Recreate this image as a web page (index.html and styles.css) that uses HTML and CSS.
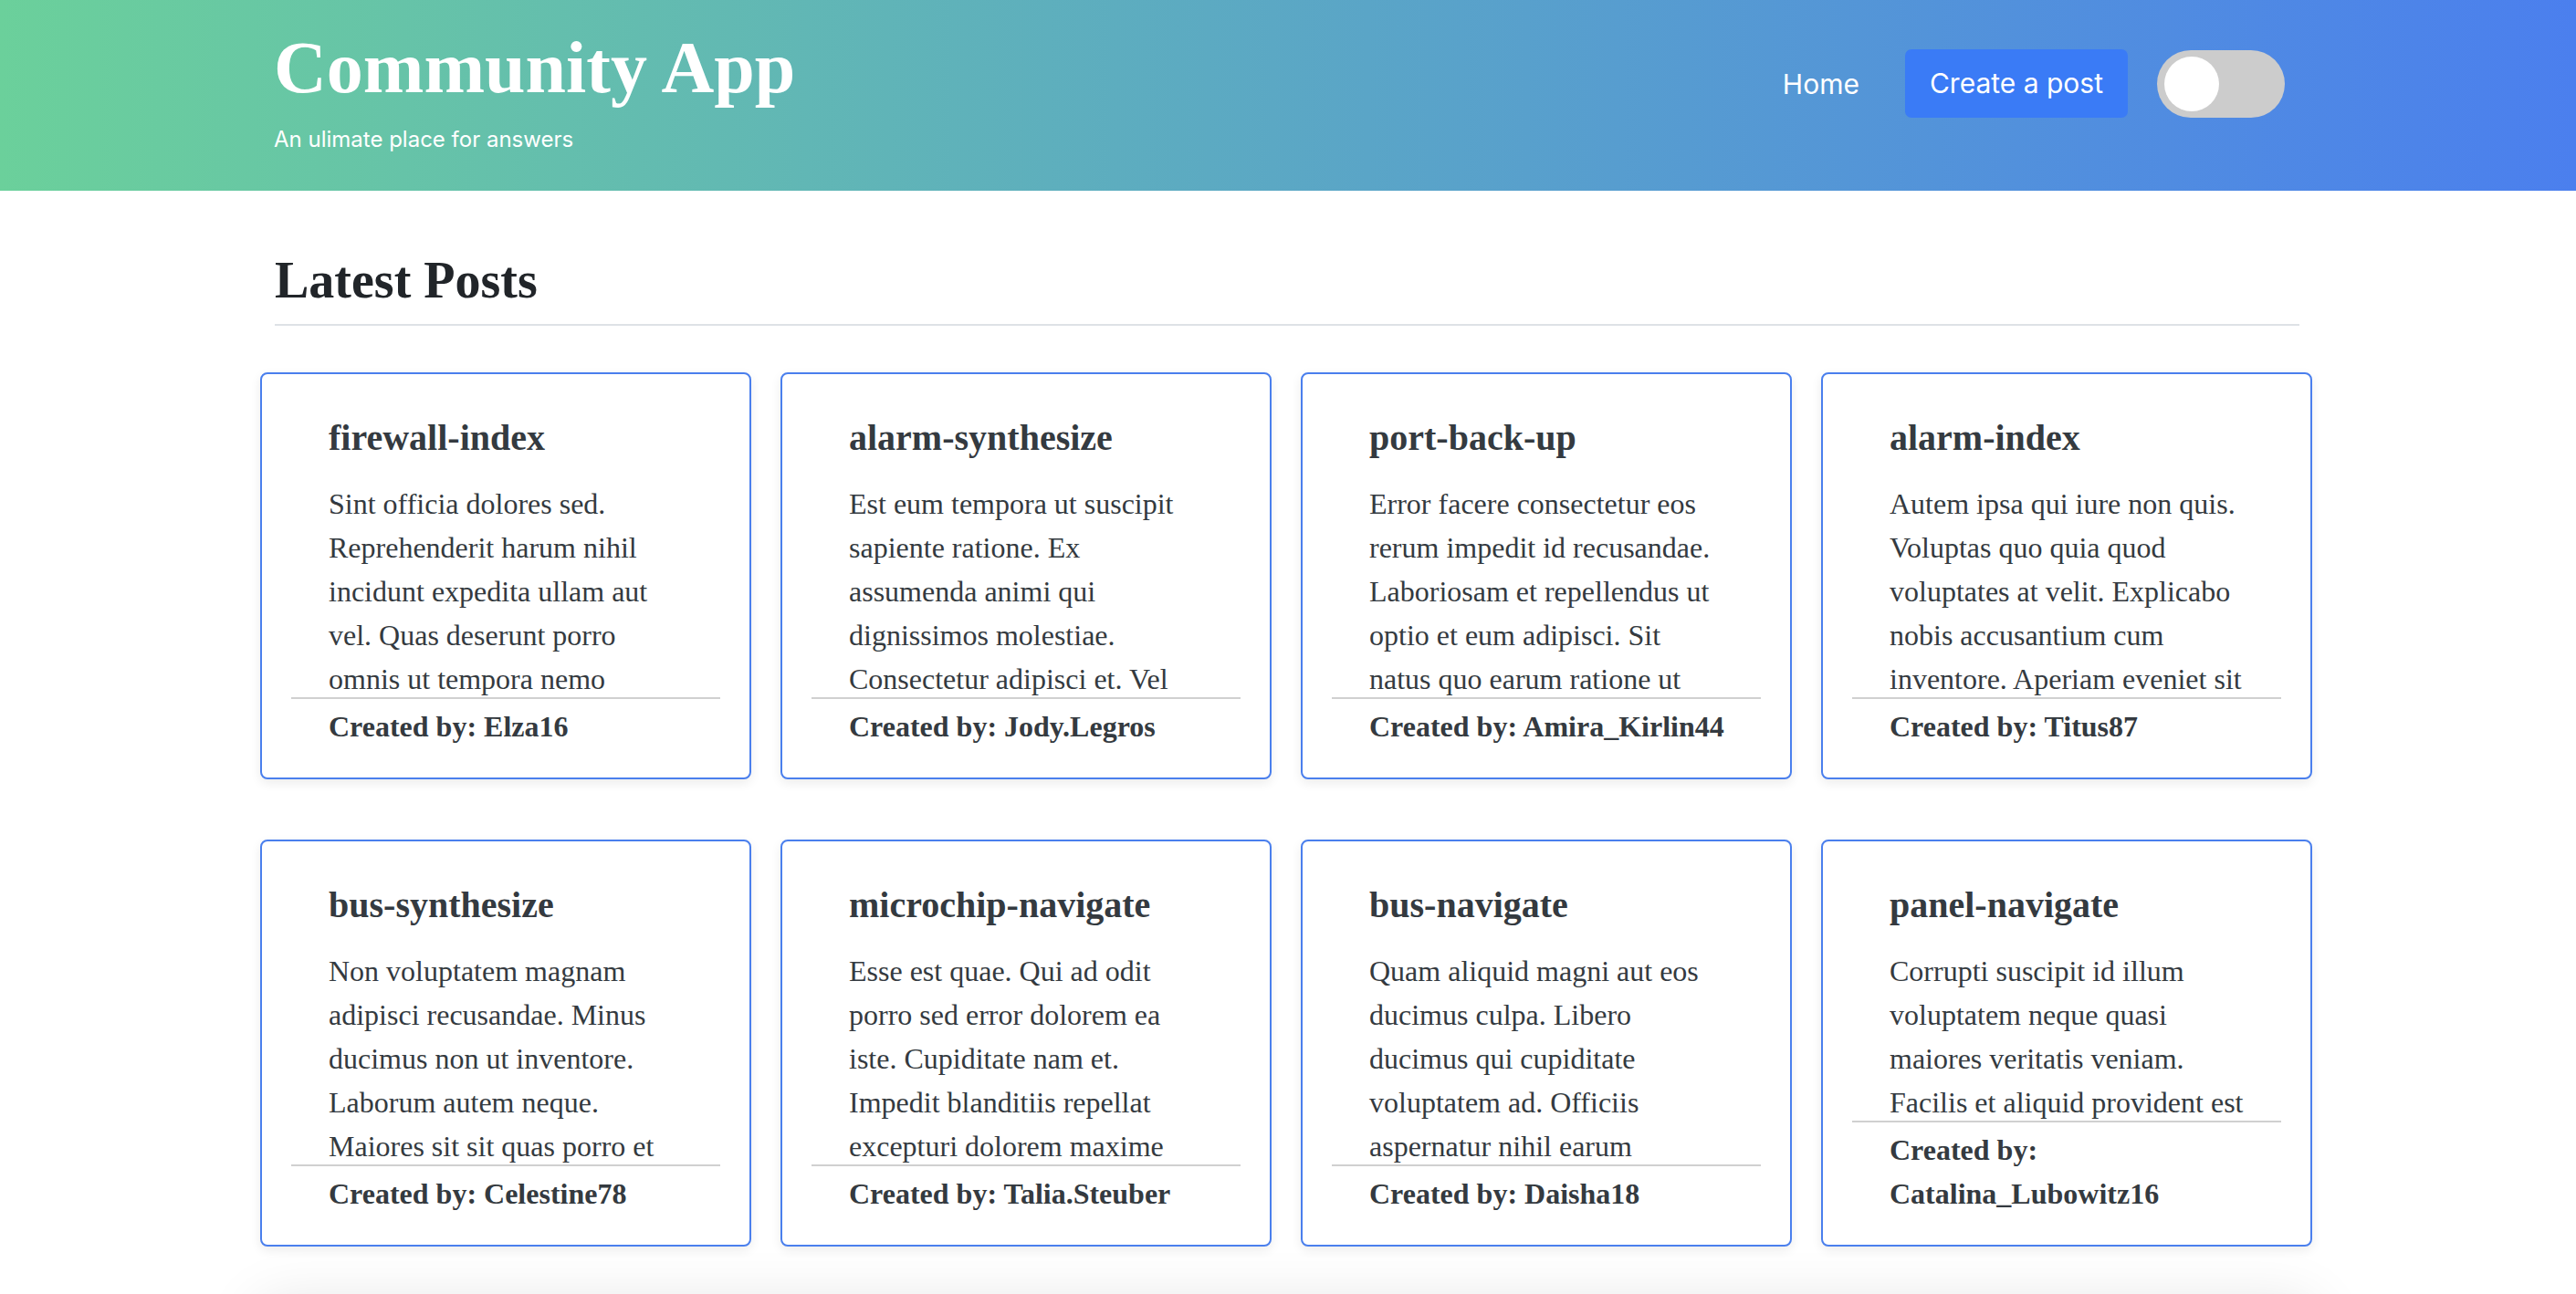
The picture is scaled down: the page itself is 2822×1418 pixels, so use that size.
FILE: index.html
```html
<!DOCTYPE html>
<html lang="en">
<head>
<meta charset="utf-8">
<title>Community App</title>
<link rel="stylesheet" href="styles.css">
</head>
<body>
<header class="site-header">
  <div class="header-inner">
    <div class="brand">
      <h1 class="brand-title">Community App</h1>
      <p class="brand-tagline">An ulimate place for answers</p>
    </div>
    <nav class="nav">
      <a class="nav-link" href="#">Home</a>
      <a class="nav-button" href="#">Create a post</a>
      <label class="switch"><span class="switch-knob"></span></label>
    </nav>
  </div>
</header>
<main class="main">
  <section class="posts-head">
    <h2 class="posts-title">Latest Posts</h2>
  </section>
  <div class="post-grid">
    <article class="post-card">
      <h3 class="post-title">firewall-index</h3>
      <p class="post-body">Sint officia dolores sed. Reprehenderit harum nihil incidunt expedita ullam aut vel. Quas deserunt porro omnis ut tempora nemo exercitationem sit. Ut rerum quis voluptas et.</p>
      <div class="post-footer">Created by: Elza16</div>
    </article>
    <article class="post-card">
      <h3 class="post-title">alarm-synthesize</h3>
      <p class="post-body">Est eum tempora ut suscipit sapiente ratione. Ex assumenda animi qui dignissimos molestiae. Consectetur adipisci et. Vel voluptatibus rerum in.</p>
      <div class="post-footer">Created by: Jody.Legros</div>
    </article>
    <article class="post-card">
      <h3 class="post-title">port-back-up</h3>
      <p class="post-body">Error facere consectetur eos rerum impedit id recusandae. Laboriosam et repellendus ut optio et eum adipisci. Sit natus quo earum ratione ut reprehenderit dolor.</p>
      <div class="post-footer">Created by: Amira_Kirlin44</div>
    </article>
    <article class="post-card">
      <h3 class="post-title">alarm-index</h3>
      <p class="post-body">Autem ipsa qui iure non quis. Voluptas quo quia quod voluptates at velit. Explicabo nobis accusantium cum inventore. Aperiam eveniet sit necessitatibus rem.</p>
      <div class="post-footer">Created by: Titus87</div>
    </article>
    <article class="post-card">
      <h3 class="post-title">bus-synthesize</h3>
      <p class="post-body">Non voluptatem magnam adipisci recusandae. Minus ducimus non ut inventore. Laborum autem neque. Maiores sit sit quas porro et consequuntur dolorum.</p>
      <div class="post-footer">Created by: Celestine78</div>
    </article>
    <article class="post-card">
      <h3 class="post-title">microchip-navigate</h3>
      <p class="post-body">Esse est quae. Qui ad odit porro sed error dolorem ea iste. Cupiditate nam et. Impedit blanditiis repellat excepturi dolorem maxime exercitationem sed.</p>
      <div class="post-footer">Created by: Talia.Steuber</div>
    </article>
    <article class="post-card">
      <h3 class="post-title">bus-navigate</h3>
      <p class="post-body">Quam aliquid magni aut eos ducimus culpa. Libero ducimus qui cupiditate voluptatem ad. Officiis aspernatur nihil earum necessitatibus aut.</p>
      <div class="post-footer">Created by: Daisha18</div>
    </article>
    <article class="post-card">
      <h3 class="post-title">panel-navigate</h3>
      <p class="post-body">Corrupti suscipit id illum voluptatem neque quasi maiores veritatis veniam. Facilis et aliquid provident est voluptatibus omnis.</p>
      <div class="post-footer">Created by: Catalina_Lubowitz16</div>
    </article>
  </div>
  <div class="more"></div>
</main>
</body>
</html>
```
FILE: styles.css
```css
body {
  margin: 0;
  background: #fff;
  font-family: "Liberation Serif", "Times New Roman", serif;
}

.site-header {
  height: 209px;
  box-sizing: border-box;
  padding-top: 26px;
  background: linear-gradient(90deg, #6bd09b 0%, #4b7fee 100%);
}

.header-inner {
  width: 2222px;
  margin: 0 auto;
  display: flex;
  justify-content: space-between;
  align-items: flex-start;
}

.brand-title {
  margin: 0;
  font-family: "Liberation Serif", "Times New Roman", serif;
  font-weight: 700;
  font-size: 80px;
  line-height: 96px;
  color: #fff;
}

.brand-tagline {
  margin: 16px 0 0;
  font-family: Inter, "Liberation Sans", sans-serif;
  font-size: 24px;
  line-height: 29px;
  color: #fff;
}

.nav {
  display: flex;
  align-items: center;
  gap: 32px;
  margin-top: 28px;
  margin-right: 19px;
}

.nav-link {
  margin-right: 18px;
  font-family: Inter, "Liberation Sans", sans-serif;
  font-size: 30px;
  color: #fff;
  text-decoration: none;
}

.nav-button {
  padding: 19px 27px;
  border-radius: 7px;
  background: #3a7bf6;
  font-family: Inter, "Liberation Sans", sans-serif;
  font-size: 30px;
  line-height: 37px;
  color: #fff;
  text-decoration: none;
}

.switch {
  position: relative;
  display: block;
  width: 140px;
  height: 74px;
  border-radius: 37px;
  background: #ccc;
}

.switch-knob {
  position: absolute;
  left: 8px;
  top: 7px;
  width: 60px;
  height: 60px;
  border-radius: 50%;
  background: #fff;
}

.main {
  width: 2248px;
  margin: 0 auto 0 calc(50% - 1126px);
}

.posts-head {
  margin-top: 65px;
  padding: 0 14px 0 16px;
}

.posts-title {
  margin: 0;
  padding-bottom: 14px;
  border-bottom: 2px solid #dee2e6;
  font-weight: 700;
  font-size: 56px;
  line-height: 67px;
  color: #212529;
}

.post-grid {
  display: grid;
  grid-template-columns: repeat(4, 1fr);
  column-gap: 32px;
  row-gap: 66px;
  margin-top: 51px;
}

.post-card {
  height: 446px;
  box-sizing: border-box;
  display: flex;
  flex-direction: column;
  padding: 32px;
  border: 2px solid #4a7fed;
  border-radius: 8px;
  background: #fff;
  box-shadow: 0 4px 12px rgba(0, 0, 0, 0.08);
  color: #343a40;
}

.post-title {
  margin: 14px 0 24px;
  padding: 0 36px 0 41px;
  font-weight: 700;
  font-size: 40px;
  line-height: 48px;
}

.post-body {
  flex: 1;
  min-height: 0;
  overflow: hidden;
  margin: 0;
  padding: 0 36px 0 41px;
  font-size: 32px;
  line-height: 48px;
}

.post-footer {
  padding: 6px 36px 0 41px;
  border-top: 2px solid #d0d0d0;
  font-weight: 700;
  font-size: 32px;
  line-height: 48px;
}

.more {
  height: 300px;
  margin-top: 64px;
  background: #fff;
  box-shadow: 0 0 60px rgba(0, 0, 0, 0.12);
}
```
